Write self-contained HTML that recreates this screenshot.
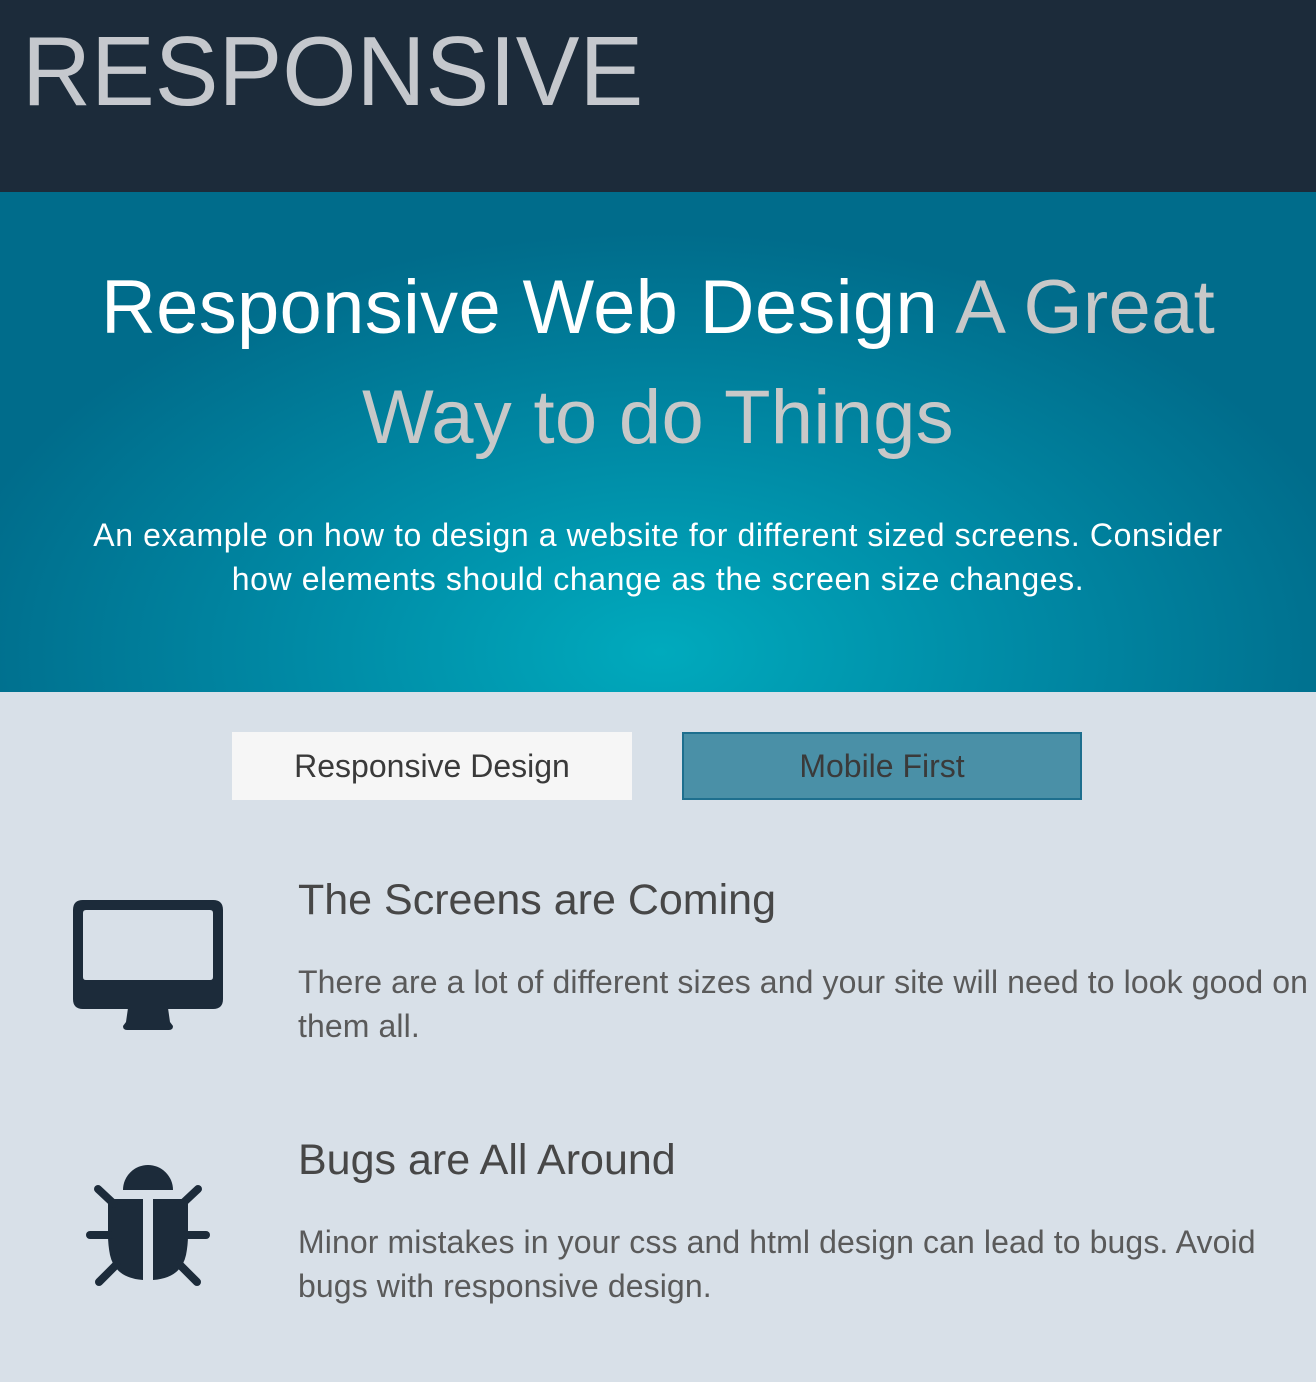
<!DOCTYPE html>
<html><head><meta charset="utf-8"><style>
*{margin:0;padding:0;box-sizing:border-box}
html,body{width:1316px;height:1382px;overflow:hidden;background:#d8e0e8;font-family:"Liberation Sans",sans-serif}
.hdr{position:absolute;left:0;top:0;width:1316px;height:192px;background:#1c2b3a}
.logo{position:absolute;left:22px;top:16px;font-size:98px;line-height:110px;color:#c5c8cd;white-space:nowrap;transform:scaleX(0.975);transform-origin:0 0}
.hero{position:absolute;left:0;top:192px;width:1316px;height:500px;background:radial-gradient(ellipse 720px 420px at 660px 460px,#00aabd 0%,#008aa5 50%,#006c8b 100%)}
.t{position:absolute;left:0;width:1316px;text-align:center;white-space:nowrap}
.h1{font-size:76px;line-height:112px;color:#fff;letter-spacing:0.3px}
.g{color:#c8c8c8}
.sub{font-size:32px;line-height:44px;color:#fff;letter-spacing:0.6px}
.btn{position:absolute;top:732px;width:400px;height:68px;font-size:32px;color:#3a3a3a;text-align:center;line-height:68px}
.b1{left:232px;background:#f6f6f6}
.b2{left:682px;background:#4a90a7;border:2px solid #1e6f8e;line-height:64px}
.hd{position:absolute;left:298px;font-size:43px;color:#474747;white-space:nowrap}
.p{position:absolute;left:298px;font-size:32px;line-height:44px;color:#5a5a5a;white-space:nowrap;letter-spacing:0.1px}
</style></head><body>
<div class="hdr"><div class="logo">RESPONSIVE</div></div>
<div class="hero">
<div class="t h1" style="top:60px">Responsive Web Design <span class="g">A Great</span></div>
<div class="t h1 g" style="top:170px">Way to do Things</div>
<div class="t sub" style="top:321px">An example on how to design a website for different sized screens. Consider</div>
<div class="t sub" style="top:365px">how elements should change as the screen size changes.</div>
</div>
<div class="btn b1">Responsive Design</div>
<div class="btn b2">Mobile First</div>
<svg style="position:absolute;left:0;top:0" width="300" height="1382">
<g fill="#1c2b3a">
<path fill-rule="evenodd" d="M83 900H213Q223 900 223 910V999Q223 1009 213 1009H83Q73 1009 73 999V910Q73 900 83 900ZM86 910H210Q213 910 213 913V977Q213 980 210 980H86Q83 980 83 977V913Q83 910 86 910Z"/>
<path d="M128 1008H168L170 1022L173 1026Q173 1030 169 1030H127Q123 1030 123 1026L126 1022Z"/>
<path d="M123 1190A25 25 0 0 1 173 1190Z"/>
<path d="M108 1199H143V1280Q115 1278 110 1255Q108 1245 108 1235Z"/>
<path d="M188 1199H153V1280Q181 1278 186 1255Q188 1245 188 1235Z"/>
</g>
<g stroke="#1c2b3a" stroke-width="8" stroke-linecap="round">
<line x1="98" y1="1189" x2="114" y2="1204"/><line x1="198" y1="1189" x2="182" y2="1204"/>
<line x1="90" y1="1235" x2="110" y2="1235"/><line x1="206" y1="1235" x2="186" y2="1235"/>
<line x1="99" y1="1282" x2="117" y2="1264"/><line x1="197" y1="1282" x2="179" y2="1264"/>
</g>
</svg>
<div class="hd" style="top:876px">The Screens are Coming</div>
<div class="p" style="top:960px">There are a lot of different sizes and your site will need to look good on</div>
<div class="p" style="top:1004px">them all.</div>
<div class="hd" style="top:1136px">Bugs are All Around</div>
<div class="p" style="top:1220px">Minor mistakes in your css and html design can lead to bugs. Avoid</div>
<div class="p" style="top:1264px">bugs with responsive design.</div>
</body></html>
